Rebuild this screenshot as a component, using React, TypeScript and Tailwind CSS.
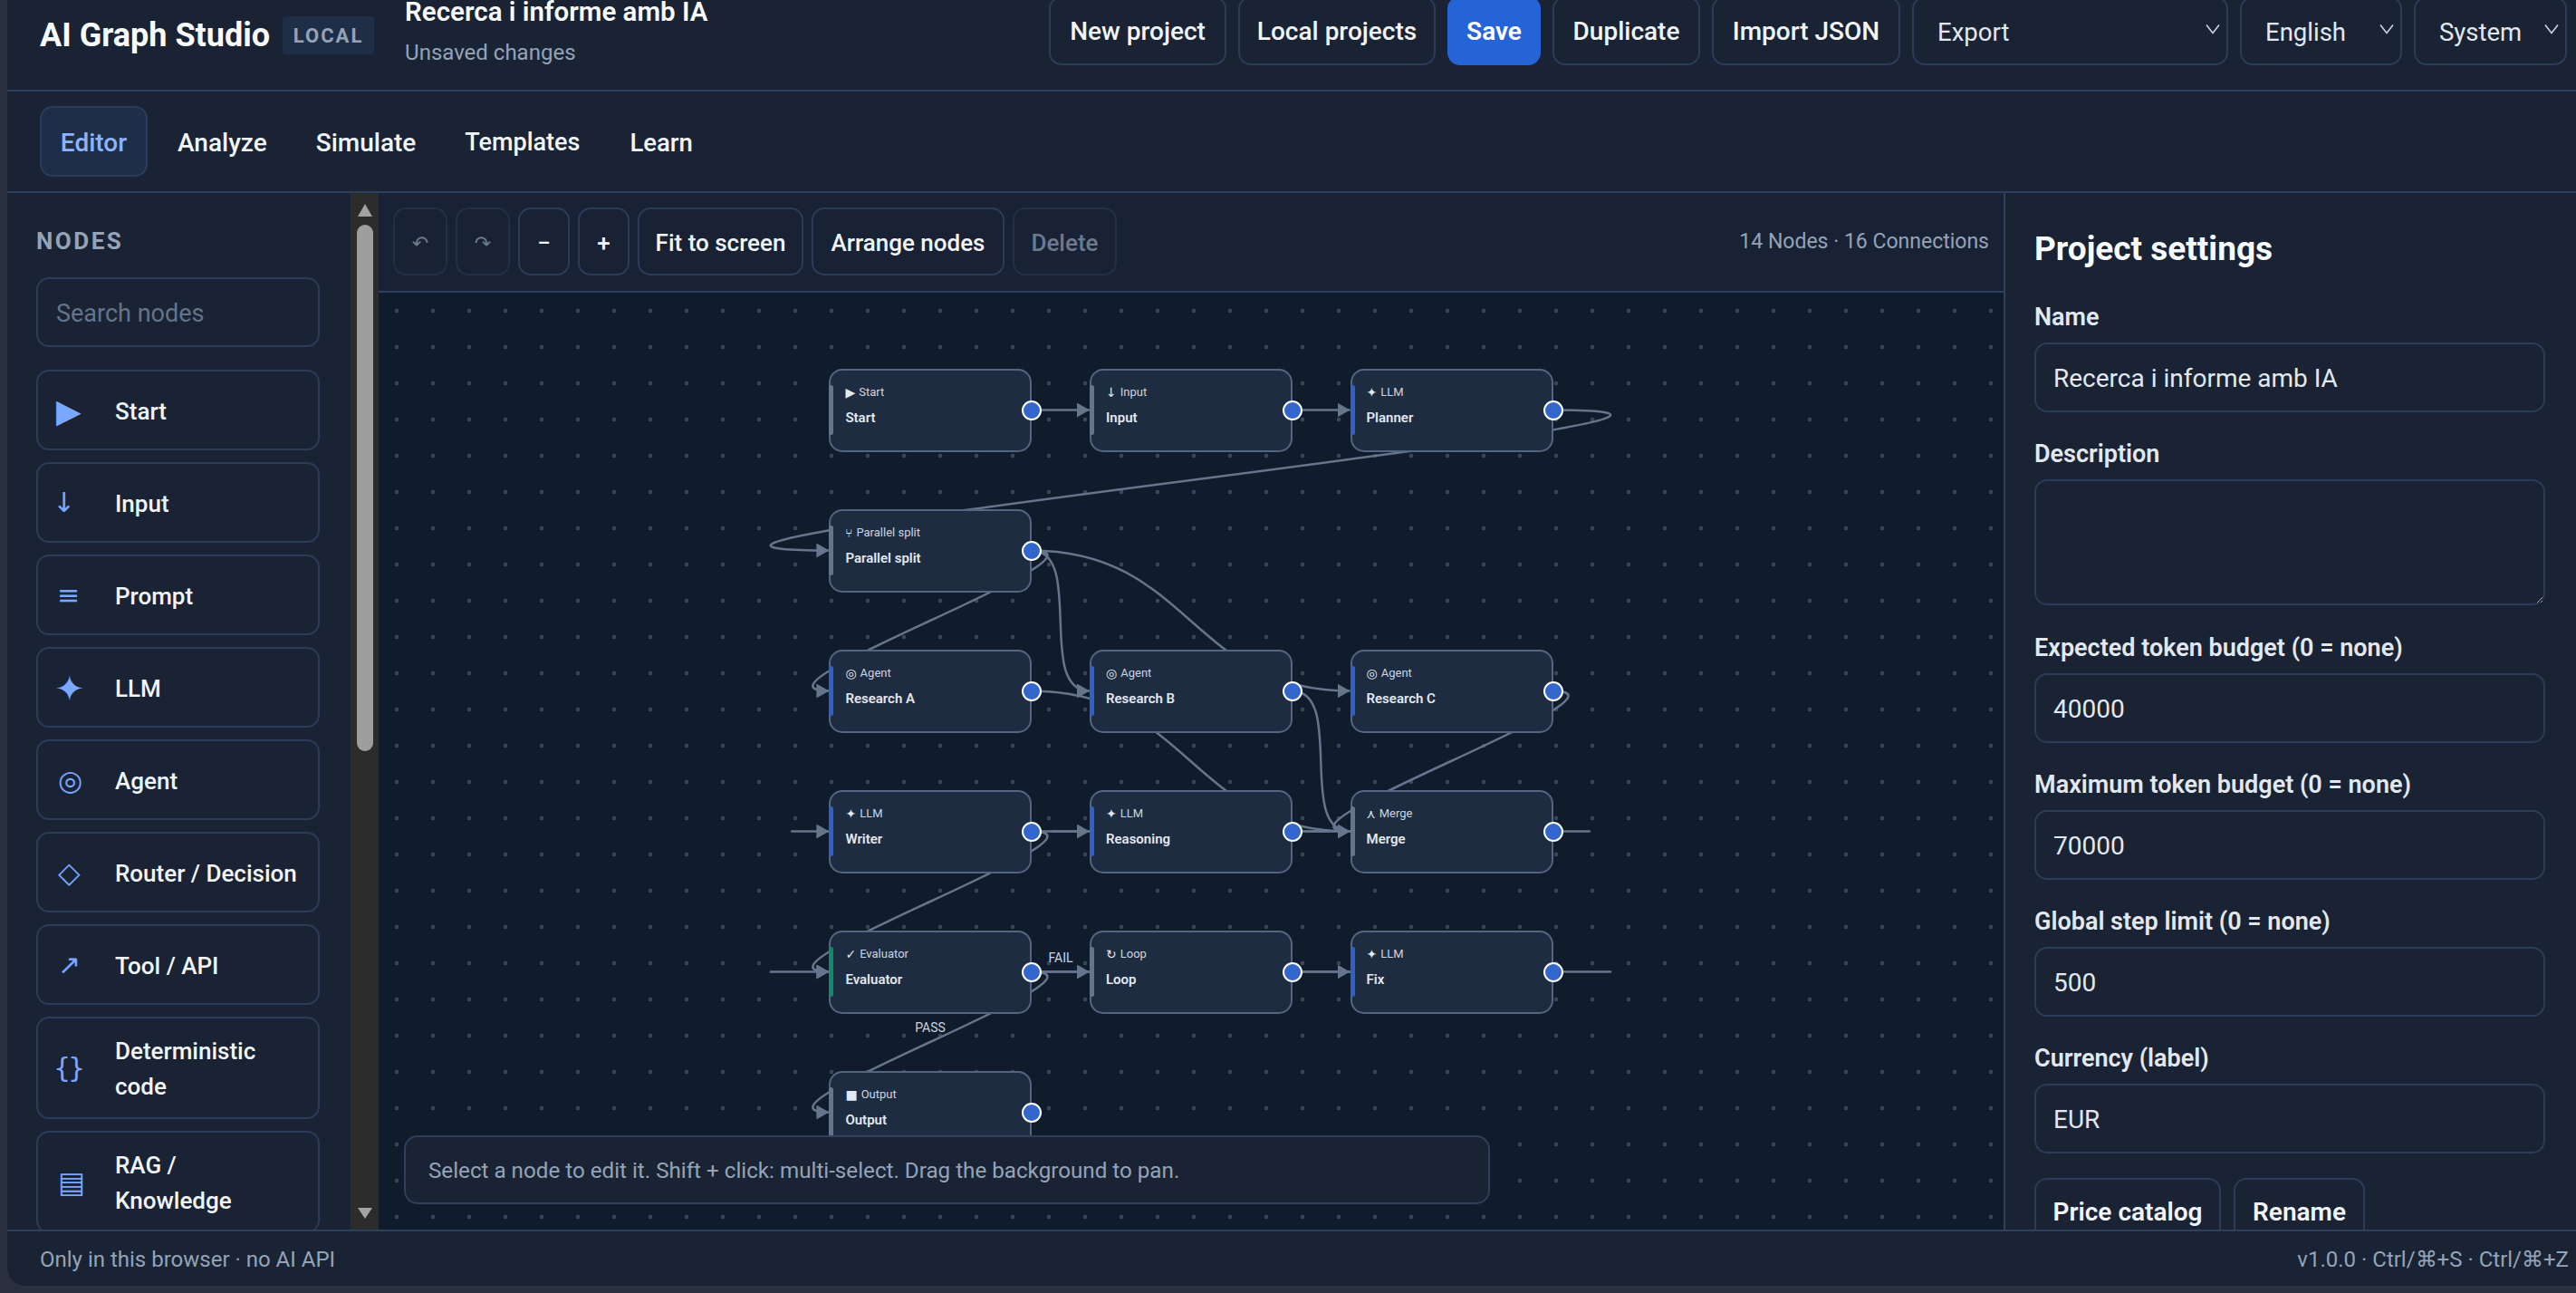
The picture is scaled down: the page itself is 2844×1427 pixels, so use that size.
import React from "react";

const btn = "flex h-[76px] shrink-0 items-center justify-center rounded-[14px] border-2 border-[#2c3c58] pt-[2px] text-[28px] font-medium text-[#f1f5f9]";
const tool = "flex h-[75px] shrink-0 items-center justify-center rounded-[14px] border-2 border-[#2c3c58] pt-[4px] text-[26px] font-medium text-[#f1f5f9]";
const toolOff = "flex h-[75px] shrink-0 items-center justify-center rounded-[14px] border-2 border-[#232f44] pt-[4px] text-[26px] font-medium text-[#6d7a8d]";

const palette = [
  { icon: "▶", label: "Start", cls: "-ml-[2px] text-[36px]" },
  { icon: "↓", label: "Input", cls: "-ml-[6px] text-[30px]" },
  { icon: "≡", label: "Prompt", cls: "-ml-[1px] text-[30px]" },
  { icon: "✦", label: "LLM", cls: "-ml-[4px] text-[40px]" },
  { icon: "◎", label: "Agent", cls: "text-[31px]" },
  { icon: "◇", label: "Router / Decision", cls: "text-[32px]" },
  { icon: "↗", label: "Tool / API", cls: "text-[30px]" },
  { icon: "{}", label: "Deterministic\ncode", tall: true, cls: "-ml-[5px] tracking-[-3px] text-[30px]" },
  { icon: "▤", label: "RAG /\nKnowledge", tall: true, cls: "text-[32px]" },
];

const colX = [497.4, 785, 1072.5];
const rowY = [84, 239, 394, 549, 704, 859];
const NODE_W = 224;
const PORT_Y = 45.5;

type Node = { id: string; c: number; r: number; icon: string; kind: string; title: string; bar: string };

const nodes: Node[] = [
  { id: "start", c: 0, r: 0, icon: "▶", kind: "Start", title: "Start", bar: "bg-[#66758c]" },
  { id: "input", c: 1, r: 0, icon: "↓", kind: "Input", title: "Input", bar: "bg-[#66758c]" },
  { id: "planner", c: 2, r: 0, icon: "✦", kind: "LLM", title: "Planner", bar: "bg-[#2f62c7]" },
  { id: "split", c: 0, r: 1, icon: "⑂", kind: "Parallel split", title: "Parallel split", bar: "bg-[#66758c]" },
  { id: "a", c: 0, r: 2, icon: "◎", kind: "Agent", title: "Research A", bar: "bg-[#2f62c7]" },
  { id: "b", c: 1, r: 2, icon: "◎", kind: "Agent", title: "Research B", bar: "bg-[#2f62c7]" },
  { id: "c", c: 2, r: 2, icon: "◎", kind: "Agent", title: "Research C", bar: "bg-[#2f62c7]" },
  { id: "writer", c: 0, r: 3, icon: "✦", kind: "LLM", title: "Writer", bar: "bg-[#2f62c7]" },
  { id: "reasoning", c: 1, r: 3, icon: "✦", kind: "LLM", title: "Reasoning", bar: "bg-[#2f62c7]" },
  { id: "merge", c: 2, r: 3, icon: "⋏", kind: "Merge", title: "Merge", bar: "bg-[#66758c]" },
  { id: "eval", c: 0, r: 4, icon: "✓", kind: "Evaluator", title: "Evaluator", bar: "bg-[#0f8a6a]" },
  { id: "loop", c: 1, r: 4, icon: "↻", kind: "Loop", title: "Loop", bar: "bg-[#66758c]" },
  { id: "fix", c: 2, r: 4, icon: "✦", kind: "LLM", title: "Fix", bar: "bg-[#2f62c7]" },
  { id: "output", c: 0, r: 5, icon: "■", kind: "Output", title: "Output", bar: "bg-[#66758c]" },
];

const edges: [string, string][] = [
  ["start", "input"], ["input", "planner"], ["planner", "split"],
  ["split", "a"], ["split", "b"], ["split", "c"],
  ["a", "merge"], ["b", "merge"], ["c", "merge"],
  ["merge", "reasoning"], ["reasoning", "writer"], ["writer", "eval"],
  ["eval", "loop"], ["eval", "output"], ["loop", "fix"], ["fix", "eval"],
];

const byId = (id: string) => nodes.find(n => n.id === id)!;

const edgePath = (from: string, to: string) => {
  const a = byId(from);
  const b = byId(to);
  const x1 = colX[a.c] + NODE_W - 1;
  const y1 = rowY[a.r] + PORT_Y;
  const x2 = colX[b.c];
  const y2 = rowY[b.r] + PORT_Y;
  const d = Math.max(60, Math.abs(x2 - x1) / 2);
  return `M${x1} ${y1} C${x1 + d} ${y1} ${x2 - d} ${y2} ${x2} ${y2}`;
};

const Chevron = () => (
  <svg viewBox="0 0 18 12" className="h-[12px] w-[18px]" fill="none" stroke="#cbd5e1" strokeWidth="1.6">
    <path d="M2 1.5 L9 10.5 L16 1.5" />
  </svg>
);

const Sel = ({ label, w }: { label: string; w: string }) => (
  <div className={`flex h-[76px] shrink-0 items-center justify-between rounded-[14px] border-2 border-[#2c3c58] pl-[26px] pr-[6px] pt-[3px] text-[27.5px] text-[#e2e8f0] ${w}`}>
    <span>{label}</span>
    <span className="-mt-[8px]"><Chevron /></span>
  </div>
);

const Field = ({ label, value }: { label: string; value: string }) => (
  <div className="mb-[28.3px]">
    <div className="mb-[12px] pt-[1px] text-[27px] font-semibold leading-[34px] text-[#e2e8f0]">{label}</div>
    <input readOnly value={value} className="-mt-[1px] h-[77px] w-full rounded-[14px] border-2 border-[#2c3c58] bg-[#192334] px-[19px] pt-[2px] text-[28px] text-[#e2e8f0] outline-none" />
  </div>
);

export default function App() {
  return (
    <div className="h-[1427px] w-[2844px] overflow-hidden bg-[#2a3040] pb-[8px] pl-[8px] font-['Roboto',sans-serif]">
      <div className="flex h-full flex-col overflow-hidden rounded-bl-[20px] bg-[#192334]">
        {/* header */}
        <header className="flex h-[101px] shrink-0 items-start border-b-2 border-[#2f405c] pl-[36px] pr-[10px]">
          <div className="mt-[18px] flex items-center">
            <div className="text-[36px] font-bold leading-[42px] text-[#f8fafc]">AI Graph Studio</div>
            <div className="ml-[14px] flex h-[42px] w-[101px] items-center justify-center rounded-[4px] bg-[#1f2e47] text-[22px] font-bold tracking-[2px] text-[#94a3b8]">LOCAL</div>
          </div>
          <div className="ml-[34px]">
            <div className="text-[29.5px] font-semibold leading-[26px] text-[#f8fafc]">Recerca i informe amb IA</div>
            <div className="mt-[16px] text-[24px] leading-[32px] text-[#94a3b8]">Unsaved changes</div>
          </div>
          <div className="-mt-[4px] ml-auto flex gap-[13px]">
            <div className={`${btn} w-[196px]`}>New project</div>
            <div className={`${btn} w-[218px]`}>Local projects</div>
            <div className="flex h-[76px] w-[103px] shrink-0 items-center justify-center rounded-[14px] bg-[#2563d9] pt-[2px] text-[28px] font-semibold text-white">Save</div>
            <div className={`${btn} w-[163px]`}>Duplicate</div>
            <div className={`${btn} w-[208px]`}>Import JSON</div>
            <Sel label="Export" w="w-[349px]" />
            <Sel label="English" w="w-[179px]" />
            <Sel label="System" w="w-[169px]" />
          </div>
        </header>

        {/* tabs */}
        <nav className="flex h-[112px] shrink-0 items-center border-b-2 border-[#2f405c] pl-[36px]">
          <div className="flex h-[78px] w-[119px] items-center justify-center rounded-[14px] border-2 border-[#2c3c58] bg-[#1f2e47] pt-[3px] text-[28px] font-medium text-[#8ab4ff]">Editor</div>
          <div className="ml-[33px] pt-[3px] text-[28px] font-medium text-[#f1f5f9]">Analyze</div>
          <div className="ml-[54px] pt-[3px] text-[28px] font-medium text-[#f1f5f9]">Simulate</div>
          <div className="ml-[54px] pt-[3px] text-[27px] font-medium text-[#f1f5f9]">Templates</div>
          <div className="ml-[55px] pt-[3px] text-[27.5px] font-medium text-[#f1f5f9]">Learn</div>
        </nav>

        {/* main */}
        <div className="flex min-h-0 flex-1">
          <aside className="flex w-[410px] shrink-0">
            <div className="min-w-0 flex-1 overflow-hidden pl-[32px] pr-[34px] pt-[38px]">
              <div className="mb-[25px] pt-[1px] text-[26px] font-bold leading-[29px] tracking-[2.5px] text-[#94a3b8]">NODES</div>
              <input placeholder="Search nodes" className="mb-[25px] h-[77px] w-full rounded-[14px] border-2 border-[#2c3c58] bg-[#192334] px-[20px] pt-[2px] text-[27px] text-[#e2e8f0] outline-none placeholder:text-[#64748b]" />
              <div className="flex flex-col gap-[13px]">
                {palette.map(item => (
                  <div key={item.label} className={`flex shrink-0 items-center rounded-[14px] border-2 border-[#2c3c58] pl-[22px] pt-[3px] ${item.tall ? "h-[113px]" : "h-[89px]"}`}>
                    <span className="w-[63px] shrink-0"><span className={`font-['DejaVu_Sans',sans-serif] leading-none text-[#7aa7ff] ${item.cls}`}>{item.icon}</span></span>
                    <span className="whitespace-pre-line text-[26px] font-medium leading-[39px] text-[#f1f5f9]">{item.label}</span>
                  </div>
                ))}
              </div>
            </div>
            {/* scrollbar */}
            <div className="relative flex w-[31px] shrink-0 flex-col items-center bg-[#2c2c2c]">
              <div className="mt-[12px] h-0 w-0 border-x-[8px] border-b-[14px] border-x-transparent border-b-[#a3a3a3]" />
              <div className="mt-[9px] h-[581px] w-[18px] rounded-full bg-[#9e9e9e]" />
              <div className="mt-auto mb-[12px] h-0 w-0 border-x-[8px] border-t-[12px] border-x-transparent border-t-[#a3a3a3]" />
            </div>
          </aside>

          <section className="flex min-w-0 flex-1 flex-col">
            <div className="flex h-[110px] shrink-0 items-start gap-[9px] border-b-2 border-[#2f405c] bg-[#182234] pl-[16px] pr-[16px] pt-[16px]">
              <div className={`${toolOff} w-[60px] font-['DejaVu_Sans',sans-serif] !text-[22px]`}>↶</div>
              <div className={`${toolOff} w-[60px] font-['DejaVu_Sans',sans-serif] !text-[22px]`}>↷</div>
              <div className={`${tool} w-[57px]`}>−</div>
              <div className={`${tool} w-[57px]`}>+</div>
              <div className={`${tool} w-[183px]`}>Fit to screen</div>
              <div className={`${tool} w-[213px]`}>Arrange nodes</div>
              <div className={`${toolOff} w-[115px]`}>Delete</div>
              <div className="ml-auto mt-[22px] text-[23px] leading-[32px] text-[#94a3b8]">14 Nodes · 16 Connections</div>
            </div>

            <div className="relative min-h-0 flex-1 overflow-hidden bg-[#101b2b] bg-[radial-gradient(circle,#3b4758_2px,transparent_2.6px)] bg-[size:40px_40px]">
              <svg className="absolute left-0 top-0 h-full w-full" fill="none">
                <defs>
                  <marker id="head" viewBox="0 0 14 16" refX="14" refY="8" markerWidth="14" markerHeight="16" markerUnits="userSpaceOnUse" orient="auto">
                    <path d="M0 0 L14 8 L0 16 Z" fill="#66758c" />
                  </marker>
                </defs>
                {edges.map(([from, to]) => (
                  <path key={from + to} d={edgePath(from, to)} stroke="#66758c" strokeWidth="2.5" markerEnd="url(#head)" />
                ))}
                <text x="753" y="739" textAnchor="middle" fontSize="14" fill="#cbd5e1">FAIL</text>
                <text x="609" y="816" textAnchor="middle" fontSize="14" fill="#cbd5e1">PASS</text>
              </svg>

              {nodes.map(n => (
                <div
                  key={n.id}
                  className="absolute h-[92px] w-[224px] rounded-[15px] border-2 border-[#56657f] bg-[#1e2c42]"
                  style={{ left: colX[n.c], top: rowY[n.r] }}
                >
                  <div className={`absolute -left-[2px] top-[16px] h-[55px] w-[5px] rounded-[3px] ${n.bar}`} />
                  <div className="pl-[16px] pt-[13px]">
                    <div className="flex h-[22px] items-center gap-[4px] text-[13px] text-[#cbd5e1]">
                      <span className="font-['DejaVu_Sans',sans-serif] text-[14px] leading-none text-[#e2e8f0]">{n.icon}</span>
                      <span>{n.kind}</span>
                    </div>
                    <div className="mt-[5px] text-[15px] font-semibold leading-[24px] text-[#e2e8f0]">{n.title}</div>
                  </div>
                  <div className="absolute -right-[13px] top-[32.5px] h-[22px] w-[22px] rounded-full border-[2.5px] border-white bg-[#3366cc]" />
                </div>
              ))}

              <div className="absolute bottom-[28px] left-[28px] flex h-[76px] w-[1199px] items-center rounded-[15px] border-2 border-[#2f405c] bg-[#192334] pl-[25px] pt-[2px] text-[24.2px] text-[#94a3b8]">
                Select a node to edit it. Shift + click: multi-select. Drag the background to pan.
              </div>
            </div>
          </section>

          <aside className="w-[632px] shrink-0 overflow-hidden border-l-2 border-[#2f405c] pl-[32px] pr-[34px] pt-[39px]">
            <div className="mb-[36px] pt-[2px] text-[37px] font-bold leading-[42px] text-[#f8fafc]">Project settings</div>
            <Field label="Name" value="Recerca i informe amb IA" />
            <div className="mb-[28.3px]">
              <div className="mb-[12px] pt-[1px] text-[27px] font-semibold leading-[34px] text-[#e2e8f0]">Description</div>
              <textarea readOnly className="-mt-[1px] block h-[139px] w-full rounded-[14px] border-2 border-[#2c3c58] bg-[#192334] px-[21px] text-[27px] text-[#e2e8f0] outline-none" />
            </div>
            <Field label="Expected token budget (0 = none)" value="40000" />
            <Field label="Maximum token budget (0 = none)" value="70000" />
            <Field label="Global step limit (0 = none)" value="500" />
            <Field label="Currency (label)" value="EUR" />
            <div className="-mt-[2px] flex gap-[14px]">
              <div className="flex h-[76px] w-[206px] items-center justify-center rounded-[14px] border-2 border-[#2c3c58] text-[28px] font-semibold text-[#f1f5f9]">Price catalog</div>
              <div className="flex h-[76px] w-[145px] items-center justify-center rounded-[14px] border-2 border-[#2c3c58] text-[28px] font-semibold text-[#f1f5f9]">Rename</div>
            </div>
          </aside>
        </div>

        {/* status */}
        <footer className="flex h-[62px] shrink-0 items-center justify-between border-t-2 border-[#2f405c] pl-[36px] pr-[8px] pt-[2px] text-[24px] text-[#94a3b8]">
          <span>Only in this browser · no AI API</span>
          <span>v1.0.0 · Ctrl/⌘+S · Ctrl/⌘+Z</span>
        </footer>
      </div>
    </div>
  );
}
